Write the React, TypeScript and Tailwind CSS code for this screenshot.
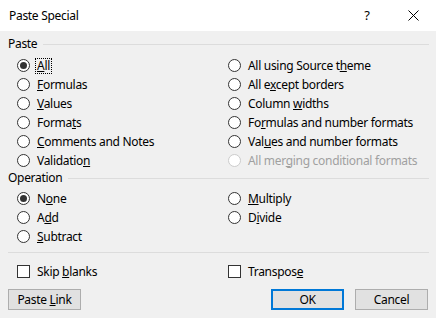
import React from "react";

const font = { fontFamily: '"Segoe UI", "Noto Sans", "Open Sans", sans-serif' };

function Radio({ checked, disabled }: { checked?: boolean; disabled?: boolean }) {
  return (
    <span
      className={`flex items-center justify-center ml-[17px] mr-[7px] w-[13px] h-[13px] rounded-full border bg-white shrink-0 ${
        disabled ? "border-[#cccccc]" : "border-[#333333]"
      }`}
    >
      {checked && <span className="w-[7px] h-[7px] rounded-full bg-[#333333]" />}
    </span>
  );
}

type Opt = { pre: string; key: string; post: string; checked?: boolean; disabled?: boolean; focus?: boolean };

function Option({ o }: { o: Opt }) {
  return (
    <div className="flex items-center h-[19px]">
      <Radio checked={o.checked} disabled={o.disabled} />
      <span
        className={`leading-[14px] ${o.disabled ? "text-[#a0a0a0]" : "text-black"} ${
          o.focus ? "outline-1 outline-dotted outline-black outline-offset-0 px-[1px] -ml-[1px]" : ""
        }`}
      >
        {o.pre}
        {o.key && <u className="underline-offset-1">{o.key}</u>}
        {o.post}
      </span>
    </div>
  );
}

function GroupLabel({ text }: { text: string }) {
  return (
    <div className="flex items-center h-[16px] pl-[8px] pr-[7px]">
      <span className="text-black">{text}</span>
      <div className="flex-1 h-px bg-[#dcdcdc] ml-[6px]" />
    </div>
  );
}

function Btn({ children, primary, className }: { children: React.ReactNode; primary?: boolean; className?: string }) {
  return (
    <div
      className={`flex items-center justify-center w-[73px] h-[21px] bg-[#e1e1e1] ${
        primary ? "border-2 border-[#0078d7]" : "border border-[#adadad]"
      } ${className ?? ""}`}
    >
      {children}
    </div>
  );
}

const pasteLeft: Opt[] = [
  { pre: "", key: "A", post: "ll", checked: true, focus: true },
  { pre: "", key: "F", post: "ormulas" },
  { pre: "", key: "V", post: "alues" },
  { pre: "Forma", key: "t", post: "s" },
  { pre: "", key: "C", post: "omments and Notes" },
  { pre: "Validatio", key: "n", post: "" },
];
const pasteRight: Opt[] = [
  { pre: "All using Source t", key: "h", post: "eme" },
  { pre: "All e", key: "x", post: "cept borders" },
  { pre: "Column ", key: "w", post: "idths" },
  { pre: "Fo", key: "r", post: "mulas and number formats" },
  { pre: "Val", key: "u", post: "es and number formats" },
  { pre: "All mer", key: "g", post: "ing conditional formats", disabled: true },
];
const opLeft: Opt[] = [
  { pre: "N", key: "o", post: "ne", checked: true },
  { pre: "A", key: "d", post: "d" },
  { pre: "", key: "S", post: "ubtract" },
];
const opRight: Opt[] = [
  { pre: "", key: "M", post: "ultiply" },
  { pre: "D", key: "i", post: "vide" },
];

export default function App() {
  return (
    <div
      className="w-[436px] h-[318px] bg-[#f0f0f0] text-[12px] tracking-[-0.3px] text-black flex flex-col overflow-hidden"
      style={font}
    >
      {/* title bar */}
      <div className="h-[31px] bg-white flex items-center shrink-0">
        <span className="pl-[9px] text-[12px] flex-1">Paste Special</span>
        <span className="w-[46px] text-center text-[13px]">?</span>
        <span className="w-[46px] flex justify-center">
          <svg width="11" height="11" viewBox="0 0 11 11">
            <path d="M0.5 0.5 L10.5 10.5 M10.5 0.5 L0.5 10.5" stroke="#000" strokeWidth="1" />
          </svg>
        </span>
      </div>

      <div className="pt-[5px]">
        <GroupLabel text="Paste" />
        <div className="mt-[4px] grid grid-cols-[211px_1fr]">
          <div className="flex flex-col">
            {pasteLeft.map((o) => (
              <Option key={o.pre + o.key} o={o} />
            ))}
          </div>
          <div className="flex flex-col">
            {pasteRight.map((o) => (
              <Option key={o.pre + o.key} o={o} />
            ))}
          </div>
        </div>

        <GroupLabel text="Operation" />
        <div className="mt-[3px] grid grid-cols-[211px_1fr]">
          <div className="flex flex-col">
            {opLeft.map((o) => (
              <Option key={o.pre + o.key} o={o} />
            ))}
          </div>
          <div className="flex flex-col">
            {opRight.map((o) => (
              <Option key={o.pre + o.key} o={o} />
            ))}
          </div>
        </div>

        <div className="mt-[6px] ml-[8px] mr-[7px] h-px bg-[#dcdcdc]" />

        <div className="mt-[9px] grid grid-cols-[211px_1fr] h-[19px]">
          <div className="flex items-center">
            <span className="ml-[17px] mr-[7px] w-[13px] h-[13px] border border-[#333333] bg-white" />
            <span>
              Skip <u className="underline-offset-1">b</u>lanks
            </span>
          </div>
          <div className="flex items-center">
            <span className="ml-[17px] mr-[7px] w-[13px] h-[13px] border border-[#333333] bg-white" />
            <span>
              Transpos<u className="underline-offset-1">e</u>
            </span>
          </div>
        </div>

        <div className="mt-[8px] flex items-center px-[8px]">
          <Btn>
            <span>
              Paste <u className="underline-offset-1">L</u>ink
            </span>
          </Btn>
          <div className="flex-1" />
          <Btn primary>OK</Btn>
          <Btn className="ml-[11px]">Cancel</Btn>
        </div>
      </div>
    </div>
  );
}
